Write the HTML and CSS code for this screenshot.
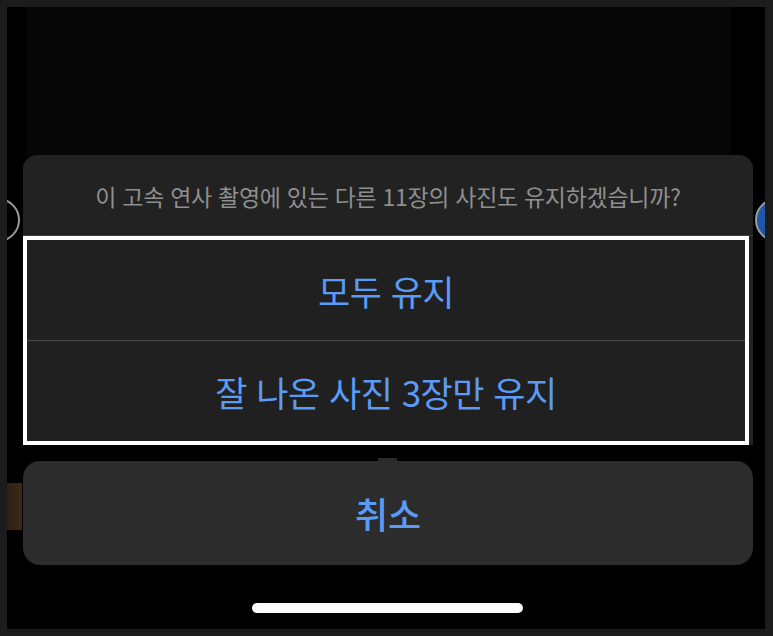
FILE: index.html
```html
<!DOCTYPE html>
<html lang="ko">
<head>
    <meta charset="UTF-8">
    <meta name="viewport" content="width=device-width, initial-scale=1.0">
    <title>사진 유지</title>
    <link rel="stylesheet" href="styles.css">
</head>
<body>
    <div class="screen">
        <!-- 뒤쪽 사진 화면 -->
        <div class="photo"></div>
        <span class="thumb thumb-left"></span>
        <span class="thumb thumb-right"></span>
        <span class="strip"></span>

        <div class="sheet">
            <div class="sheet-title">이 고속 연사 촬영에 있는 다른 11장의 사진도 유지하겠습니까?</div>
            <div class="highlight">
                <button class="action">모두 유지</button>
                <button class="action">잘 나온 사진 3장만 유지</button>
            </div>
        </div>

        <div class="cancel-wrap">
            <span class="notch"></span>
            <button class="cancel">취소</button>
        </div>

        <div class="home-bar"></div>
    </div>
</body>
</html>
```

FILE: styles.css
```css
* {
    margin: 0;
    padding: 0;
    box-sizing: border-box;
}
body {
    font-family: "Noto Sans CJK KR", "Noto Sans", sans-serif;
    background-color: #1c1c1c;
    height: 636px;
    overflow: hidden;
}
.screen {
    position: relative;
    margin: 7px 8px 0 7px;
    height: 622px;
    background-color: #000;
    overflow: hidden;
    display: flex;
    flex-direction: column;
}
.photo {
    height: 148px;
    margin: 0 35px 0 19px;
    background: linear-gradient(180deg, #060606, #080707 60%, #060606);
}
.thumb {
    position: absolute;
    top: 191px;
    width: 44px;
    height: 44px;
    border-radius: 50%;
    border: 2px solid #9a9a9a;
}
.thumb-left {
    left: -31px;
}
.thumb-right {
    left: 748px;
    background-color: #2056a8;
}
.strip {
    position: absolute;
    left: 0;
    top: 476px;
    width: 15px;
    height: 47px;
    background: linear-gradient(90deg, #2e2114, #3a2a17);
}
.sheet {
    margin: 0 12px 0 16px;
    background-color: #222;
    border-radius: 14px 14px 0 0;
    position: relative;
    z-index: 1;
}
.sheet-title {
    height: 81px;
    padding-top: 28px;
    border-bottom: 1px solid #3c3c3c;
    text-align: center;
    color: #8f8f8f;
    font-size: 23px;
    line-height: 26px;
    letter-spacing: -0.3px;
    white-space: nowrap;
}
.highlight {
    margin-right: 4px;
    border: 4px solid #fff;
    background-color: #202020;
    display: flex;
    flex-direction: column;
}
.action {
    height: 100px;
    border: none;
    background: none;
    font-family: inherit;
    font-size: 35px;
    color: #5b9bf5;
    letter-spacing: -0.5px;
}
.action + .action {
    height: 101px;
    border-top: 1px solid #4a4a4a;
}
.cancel-wrap {
    position: relative;
    margin: 16px 12px 0 16px;
}
.notch {
    position: absolute;
    left: 355px;
    top: -3px;
    width: 19px;
    height: 3px;
    background-color: #2a2a2a;
}
.cancel {
    width: 100%;
    height: 104px;
    border: none;
    border-radius: 17px;
    background-color: #2c2c2c;
    font-family: inherit;
    font-size: 36px;
    font-weight: 500;
    color: #5b9bf5;
}
.home-bar {
    width: 271px;
    height: 10px;
    margin: 38px auto 0 245px;
    border-radius: 5px;
    background-color: #fff;
}
```
